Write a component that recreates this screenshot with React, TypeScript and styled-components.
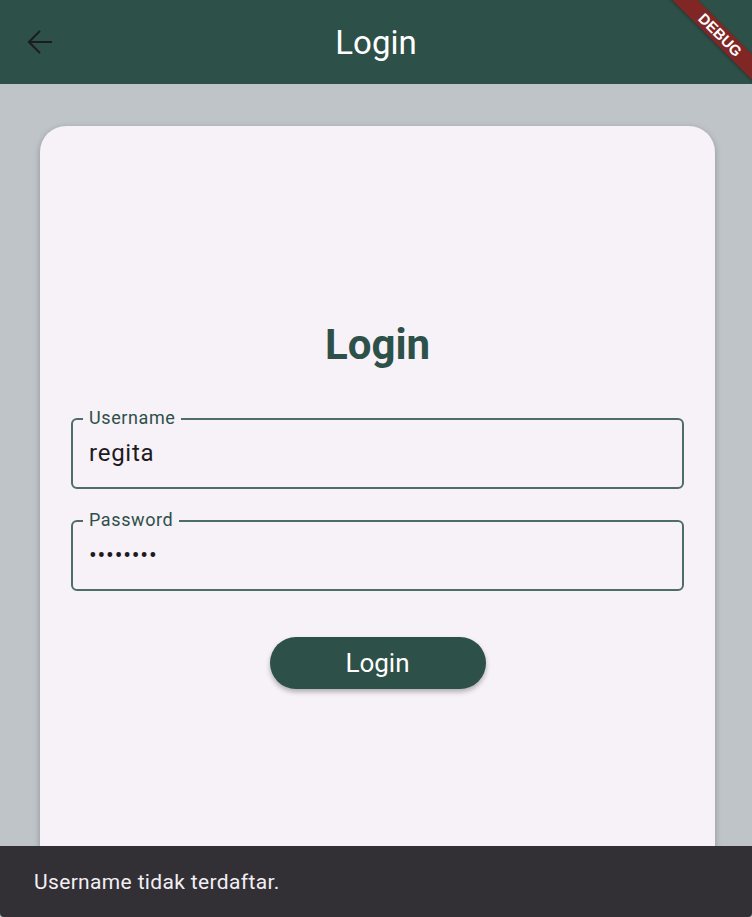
import React from 'react';
import styled, { createGlobalStyle } from 'styled-components';

const GlobalStyle = createGlobalStyle`
  html, body {
    margin: 0;
    padding: 0;
    height: 100%;
  }
  body {
    font-family: Roboto, "Liberation Sans", sans-serif;
    background: #bec4c7;
  }
  #root {
    height: 100%;
  }
`;

const Screen = styled.div`
  position: relative;
  width: 752px;
  height: 917px;
  display: flex;
  flex-direction: column;
  overflow: hidden;
  background: #bec4c7;
`;

const AppBar = styled.header`
  height: 84px;
  flex-shrink: 0;
  background: #2d5049;
  display: flex;
  align-items: center;
  justify-content: center;
  position: relative;
`;

const BackButton = styled.button`
  position: absolute;
  left: 22px;
  top: 24px;
  width: 36px;
  height: 36px;
  border: none;
  background: transparent;
  padding: 0;
  display: flex;
`;

const AppTitle = styled.h1`
  margin: 0;
  font-size: 33px;
  font-weight: 400;
  color: #ffffff;
`;

const Body = styled.main`
  flex: 1;
  padding: 42px 37px 37px 40px;
  display: flex;
`;

const Card = styled.section`
  flex: 1;
  background: #f7f1f8;
  border-radius: 26px;
  box-shadow: 0 2px 6px rgba(0, 0, 0, 0.25);
  display: flex;
  flex-direction: column;
  justify-content: center;
  padding: 3px 31px 0;
`;

const CardTitle = styled.h2`
  margin: 0 0 47px;
  text-align: center;
  font-size: 42px;
  font-weight: 700;
  color: #2d5049;
  line-height: 1.2;
`;

const Field = styled.div`
  position: relative;
  height: 71px;
  margin-bottom: 31px;
  padding: 0 16px;
  border: 2px solid #4f6d68;
  border-radius: 6px;
  display: flex;
  align-items: center;
  box-sizing: border-box;
`;

const FloatingLabel = styled.span`
  position: absolute;
  top: -11px;
  left: 10px;
  padding: 0 6px;
  background: #f7f1f8;
  font-size: 18px;
  line-height: 18px;
  letter-spacing: 0.6px;
  color: #2d5049;
`;

const Value = styled.span<{ $secret?: boolean }>`
  font-size: ${(p) => (p.$secret ? '23px' : '24px')};
  letter-spacing: ${(p) => (p.$secret ? '0.8px' : '0.75px')};
  color: #1d1b20;
  margin-top: ${(p) => (p.$secret ? '1px' : '0')};
`;

const ButtonRow = styled.div`
  display: flex;
  justify-content: center;
  margin-top: 15px;
`;

const LoginButton = styled.button`
  width: 216px;
  height: 52px;
  border: none;
  border-radius: 26px;
  background: #2d5049;
  color: #ffffff;
  font-family: Roboto, "Liberation Sans", sans-serif;
  font-size: 26px;
  box-shadow: 0 3px 5px rgba(0, 0, 0, 0.28);
`;

const SnackBar = styled.div`
  position: absolute;
  left: 0;
  right: 0;
  bottom: 0;
  height: 71px;
  background: #323035;
  border-radius: 0 0 4px 4px;
  display: flex;
  align-items: center;
  padding: 0 34px;
  color: #f2eff4;
  font-size: 21px;
  letter-spacing: 0.35px;
`;

const DebugRibbon = styled.div`
  position: absolute;
  top: 26px;
  right: -48px;
  width: 160px;
  height: 18px;
  background: rgba(140, 32, 32, 0.88);
  transform: rotate(45deg);
  color: #ffffff;
  font-family: "Liberation Sans", sans-serif;
  font-weight: 700;
  font-size: 15px;
  line-height: 18px;
  text-align: center;
  box-shadow: 0 1px 3px rgba(0, 0, 0, 0.3);
`;

const BackArrow = () => (
  <svg width="36" height="36" viewBox="0 0 24 24" fill="none">
    <path
      d="M20 12H4.6M12 4.6L4.6 12 12 19.4"
      stroke="#1d1b20"
      strokeWidth="1.35"
    />
  </svg>
);

export default function App() {
  return (
    <>
      <GlobalStyle />
      <Screen>
        <AppBar>
          <BackButton aria-label="Back">
            <BackArrow />
          </BackButton>
          <AppTitle>Login</AppTitle>
        </AppBar>
        <Body>
          <Card>
            <CardTitle>Login</CardTitle>
            <Field>
              <FloatingLabel>Username</FloatingLabel>
              <Value>regita</Value>
            </Field>
            <Field>
              <FloatingLabel>Password</FloatingLabel>
              <Value $secret>••••••••</Value>
            </Field>
            <ButtonRow>
              <LoginButton>Login</LoginButton>
            </ButtonRow>
          </Card>
        </Body>
        <SnackBar>Username tidak terdaftar.</SnackBar>
        <DebugRibbon>DEBUG</DebugRibbon>
      </Screen>
    </>
  );
}
